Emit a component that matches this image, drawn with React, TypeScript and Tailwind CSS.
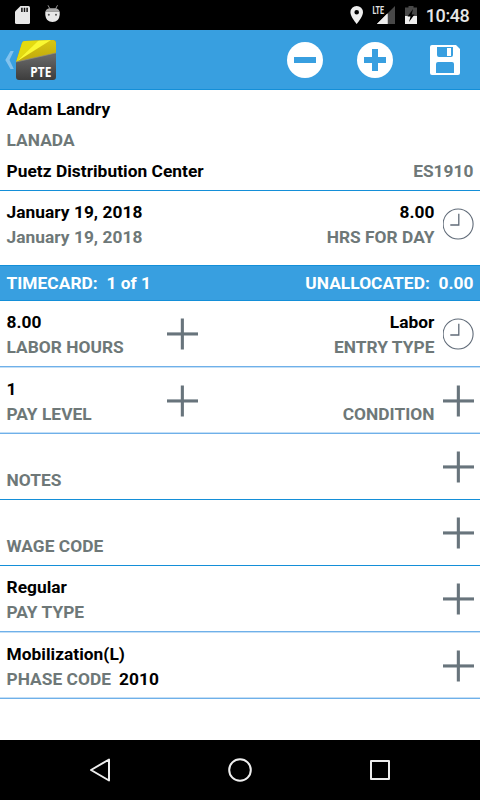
import React from "react";

type RowProps = {
  height: string;
  line: string;
  value?: string;
  label: string;
  extra?: string;
  middle?: React.ReactNode;
  rightValue?: string;
  rightLabel?: string;
  icon: React.ReactNode;
};

const softBelow = "border-[#6fb0e9] shadow-[0_1px_0_#c4dff6]";
const softAbove = "border-[#6fb0e9] shadow-[inset_0_-1px_0_#c4dff6]";
const solid = "border-[#148fd8]";

function Plus() {
  return (
    <svg width="32" height="32" viewBox="0 0 32 32" className="shrink-0" fill="#68747c">
      <rect x="0" y="14.4" width="31" height="3.1" />
      <rect x="13.8" y="0.5" width="3.1" height="31" />
    </svg>
  );
}

function Clock() {
  return (
    <svg width="32" height="32" viewBox="0 0 32 32" className="shrink-0" fill="none" stroke="#606b78">
      <circle cx="15.1" cy="16" r="15" strokeWidth="1.1" />
      <path d="M15.8 5.800V17H7.300" strokeWidth="1.300" />
    </svg>
  );
}

function Row({ height, line, value, label, extra, middle, rightValue, rightLabel, icon }: RowProps) {
  return (
    <div className={`flex shrink-0 items-start border-b ${height} ${line} pl-[6.5px] pr-[5px]`}>
      <div className="w-[160px] whitespace-nowrap">
        <div className="h-[25px] text-black">{value}</div>
        <div className="h-[25px] text-[#6e7878]">
          {label}
          {extra && <span className="ml-[8px] text-black">{extra}</span>}
        </div>
      </div>
      <div className="w-8 pt-[8px]">{middle}</div>
      <div className="flex-1 whitespace-nowrap pr-[8.5px] text-right">
        <div className="h-[25px] text-black">{rightValue}</div>
        <div className="h-[25px] text-[#6e7878]">{rightLabel}</div>
      </div>
      <div className="pt-[8px]">{icon}</div>
    </div>
  );
}

function StatusBar() {
  return (
    <div className="flex h-[30px] items-center bg-black">
      <svg width="480" height="30" viewBox="0 0 480 30">
        <path d="M20.5 6H28.5Q30 6 30 7.500V22.500Q30 24 28.500 24H16.500Q15 24 15 22.500V11.500Z" fill="#e8e8e8" />
        <path d="M21.900 7.800V12M24.500 7.800V12M27.100 7.800V12" stroke="#111" strokeWidth="1.500" />
        <path d="M45.500 11.500Q46 8.500 50 8.200H55Q59 8.500 59.500 11.500Z" fill="#aaa" />
        <path d="M48 5.300L50 9M57.500 5.300L55.500 9" stroke="#999" strokeWidth="1" />
        <path d="M45.300 11.500H59.700V15Q59 22 52.500 22Q46 22 45.300 15Z" fill="#e8e8e8" />
        <circle cx="48.800" cy="14.800" r="1" fill="#555" />
        <circle cx="56" cy="14.800" r="1" fill="#555" />
        <path fillRule="evenodd" d="M356.700 6A6.300 6.300 0 0 0 350.400 12.300C350.400 17 356.700 24 356.700 24S363 17 363 12.300A6.300 6.300 0 0 0 356.700 6ZM356.700 10A2.300 2.300 0 1 1 356.700 14.600A2.300 2.300 0 1 1 356.700 10Z" fill="#eee" />
        <path d="M395 6V24H377Z" fill="#484848" />
        <path d="M387.500 13.500V24H377Z" fill="#eee" />
        <path d="M371 5H385V15H371Z" fill="#000" />
        <path d="M387.500 13.500V24H377L386 15Z" fill="#eee" />
        <text x="372.500" y="14" fontFamily="Roboto, sans-serif" fontSize="11.500" fontWeight="700" textLength="11.500" lengthAdjust="spacingAndGlyphs" fill="#e4e4e4">LTE</text>
        <path d="M408.500 6H413.500V7.500H417V24H405V7.500H408.500Z" fill="#484848" />
        <path d="M405 16H417V24H405Z" fill="#eee" />
        <path d="M413 9L407.500 16.500H410.500L409 22L414.500 14.500H411.700Z" fill="#000" />
        <text x="425.800" y="22" fontFamily="Roboto, sans-serif" fontSize="18" fontWeight="500" textLength="44" fill="#e6e6e6">10:48</text>
      </svg>
    </div>
  );
}

function ActionBar() {
  return (
    <header className="h-[60px] border-b border-[#148fd8] bg-[#389fe0]">
      <svg width="480" height="59" viewBox="0 30 480 59">
        <defs>
          <linearGradient id="dark" x1="0" y1="0" x2="0" y2="1">
            <stop offset="0.4" stopColor="#676767" />
            <stop offset="1" stopColor="#3d3d3d" />
          </linearGradient>
          <linearGradient id="gold" x1="0" y1="0" x2="0" y2="1">
            <stop offset="0" stopColor="#d9c812" />
            <stop offset="1" stopColor="#bfa70c" />
          </linearGradient>
          <clipPath id="logo">
            <path d="M25 41L53 40Q56 40 56 43V77Q56 80 53 80H19Q16 80 16 77V62L22 43Q22.500 41 25 41Z" />
          </clipPath>
        </defs>
        <path d="M10.500 51H13.800L9.500 60L13.800 69H10.500L5.300 60Z" fill="#83c3ee" />
        <g clipPath="url(#logo)">
          <rect x="16" y="40" width="40" height="40" fill="url(#dark)" />
          <path d="M16 39H56V53L16 62Z" fill="url(#gold)" />
          <path d="M16 39H40L16 62Z" fill="#e3da10" />
          <path d="M16 62L39 40H51Z" fill="#faf832" />
          <path d="M16 62L56 53" stroke="#8d8d85" strokeWidth="0.700" />
        </g>
        <text x="30.300" y="76.800" fontFamily="Open Sans, sans-serif" fontSize="13.800" fontWeight="700" textLength="21" lengthAdjust="spacingAndGlyphs" fill="#fff">PTE</text>
        <circle cx="305" cy="60" r="18" fill="#fff" />
        <rect x="294" y="57" width="22" height="6" fill="#389fe0" />
        <circle cx="375" cy="60" r="18" fill="#fff" />
        <path d="M372 49H378V57H386V63H378V71H372V63H364V57H372Z" fill="#389fe0" />
        <path d="M432 45H456L460 49V73Q460 75 458 75H432Q430 75 430 73V47Q430 45 432 45Z" fill="#fff" />
        <path d="M437 47H453V55Q453 57 451 57H439Q437 57 437 55ZM438 62H452Q454 62 454 64V73H436V64Q436 62 438 62Z" fill="#389fe0" />
        <rect x="447" y="48" width="4" height="8" fill="#fff" />
      </svg>
    </header>
  );
}

export default function App() {
  return (
    <div className="flex h-[800px] w-[480px] flex-col overflow-hidden bg-white font-['Roboto',sans-serif] text-[17.33px] leading-[25px] font-bold tracking-[0.03px]">
      <StatusBar />
      <ActionBar />
      <section className="h-[101px] border-b border-[#148fd8] px-[6.5px] pt-[4px] leading-[31px]">
        <div className="text-black">Adam Landry</div>
        <div className="text-[#6e7878]">LANADA</div>
        <div className="flex justify-between">
          <span className="text-black">Puetz Distribution Center</span>
          <span className="text-[#6e7878]">ES1910</span>
        </div>
      </section>
      <Row height="h-[74px] pt-[9px]" line="border-white" value="January 19, 2018" label="January 19, 2018" rightValue="8.00" rightLabel="HRS FOR DAY" icon={<Clock />} />
      <div className="flex h-[36px] items-center justify-between border-y border-[#148fd8] bg-[#389fe0] px-[6.5px] whitespace-pre text-white">
        <span>TIMECARD:  1 of 1</span>
        <span>UNALLOCATED:  0.00</span>
      </div>
      <Row height="h-[66px] pt-[9px]" line={softBelow} value="8.00" label="LABOR HOURS" middle={<Plus />} rightValue="Labor" rightLabel="ENTRY TYPE" icon={<Clock />} />
      <Row height="h-[67px] pt-[10px]" line={softAbove} value="1" label="PAY LEVEL" middle={<Plus />} rightLabel="CONDITION" icon={<Plus />} />
      <Row height="h-[66px] pt-[9px]" line={solid} label="NOTES" icon={<Plus />} />
      <Row height="h-[66px] pt-[9px]" line={solid} label="WAGE CODE" icon={<Plus />} />
      <Row height="h-[66px] pt-[9px]" line={softBelow} value="Regular" label="PAY TYPE" icon={<Plus />} />
      <Row height="h-[67px] pt-[10px]" line={softAbove} value="Mobilization(L)" label="PHASE CODE" extra="2010" icon={<Plus />} />
      <div className="flex-1" />
      <nav className="h-[60px] bg-black">
        <svg width="480" height="60" viewBox="0 740 480 60" fill="none" stroke="#eee" strokeWidth="2" strokeLinejoin="round">
          <path d="M109 759.500V780.500L91 770Z" />
          <circle cx="240" cy="770" r="10.800" />
          <rect x="371" y="761" width="18" height="18" />
        </svg>
      </nav>
    </div>
  );
}
